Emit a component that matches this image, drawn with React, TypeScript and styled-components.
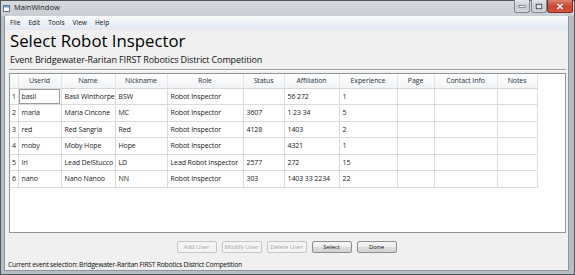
import React from 'react';
import styled, { createGlobalStyle } from 'styled-components';

const Global = createGlobalStyle`
  html, body { margin: 0; padding: 0; width: 575px; height: 275px; overflow: hidden; background: #fff; }
  body { font-family: "Open Sans", "Noto Sans", sans-serif; }
  * { box-sizing: border-box; }
`;

const Window = styled.div`
  width: 575px;
  height: 275px;
  display: flex;
  flex-direction: column;
  background: #b7bdc4;
  border: 1px solid #50565d;
`;

const TitleBar = styled.div`
  height: 15px;
  display: flex;
  align-items: flex-start;
  background: linear-gradient(#d6dadf, #c8cdd3);
`;

const TitleIcon = styled.svg`
  width: 7px;
  height: 7px;
  margin: 4px 0 0 2px;
`;

const TitleText = styled.span`
  font-size: 7.5px;
  line-height: 13px;
  margin-left: 4px;
  color: #1b1b1b;
`;

const Controls = styled.div`
  margin-left: auto;
  display: flex;
  margin-right: 1px;
`;

const CtrlButton = styled.div<{ $close?: boolean }>`
  width: ${p => (p.$close ? 26 : 16)}px;
  height: 13px;
  margin-top: -1px;
  border: 1px solid ${p => (p.$close ? '#7b2b22' : '#7f868e')};
  border-top: none;
  border-radius: 0 0 3px 3px;
  margin-left: ${p => (p.$close ? 0 : 1)}px;
  background: ${p =>
    p.$close
      ? 'linear-gradient(#e0806f, #c8442f 55%, #d4563f)'
      : 'linear-gradient(#e3e6ea, #c9ced4 55%, #d3d7dc)'};
  display: flex;
  align-items: center;
  justify-content: center;
`;

const Body = styled.div`
  flex: 1;
  display: flex;
  flex-direction: column;
  margin: 0 5px 3px 3px;
  background: #f0f0f0;
  border: 1px solid #8e959c;
  border-top: none;
`;

const MenuBar = styled.div`
  height: 14px;
  display: flex;
  align-items: center;
  padding-left: 1px;
  background: linear-gradient(#f6f8fc, #e3eaf4);
  border-top: 1px solid #fdfdfe;
  border-bottom: 1px solid #e6ebf2;
`;

const MenuItem = styled.span`
  font-size: 6.6px;
  line-height: 12px;
  padding: 0 4px;
  color: #111;
`;

const Central = styled.div`
  flex: 1;
  display: flex;
  flex-direction: column;
  padding: 0 2px 0 4px;
`;

const Heading = styled.h1`
  margin: 1px 0 0 0;
  font-weight: 400;
  font-size: 16.8px;
  line-height: 20px;
  color: #000;
  padding-left: 1px;
`;

const EventLine = styled.div`
  margin-top: 3px;
  font-size: 9px;
  line-height: 12px;
  letter-spacing: -0.12px;
  color: #111;
  padding-left: 1px;
`;

const Separator = styled.hr`
  margin: 3px 0 0 0;
  border: none;
  border-top: 1px solid #a0a0a0;
  border-bottom: 1px solid #ffffff;
  height: 0;
`;

const TableBox = styled.div`
  margin-top: 2px;
  height: 160px;
  border: 1px solid #8f969d;
  background: #fff;
  overflow: hidden;
`;

const Grid = styled.table`
  table-layout: fixed;
  border-collapse: collapse;
  width: 527px;
  font-size: 7px;
  letter-spacing: -0.1px;
  color: #1a1a1a;
`;

const HeadCell = styled.th`
  height: 14px;
  padding: 0;
  font-weight: 400;
  color: #2a3340;
  text-align: center;
  background: linear-gradient(#ffffff, #f7f8f9 60%, #f1f2f4);
  border-right: 1px solid #e3e5e8;
  border-bottom: 1px solid #d5d8dc;
  white-space: nowrap;
  overflow: hidden;
`;

const RowHead = styled.td`
  padding: 0 0 0 2px;
  border-right: 1px solid #dcdcdc;
  border-bottom: 1px solid #dcdcdc;
  color: #2a2a2a;
`;

const Cell = styled.td<{ $current?: boolean }>`
  height: 16.5px;
  padding: 0 3px;
  border-right: 1px solid #dcdcdc;
  border-bottom: 1px solid #dcdcdc;
  white-space: nowrap;
  overflow: hidden;
  outline: ${p => (p.$current ? '1px solid #9a9a9a' : 'none')};
  outline-offset: -2px;
`;

const ButtonRow = styled.div`
  display: flex;
  justify-content: center;
  gap: 5px;
  margin-top: 8px;
  padding-right: 2px;
`;

const PushButton = styled.button<{ $disabled?: boolean }>`
  width: 40px;
  height: 12px;
  padding: 0;
  font-family: inherit;
  font-size: 6px;
  line-height: 10px;
  border-radius: 2px;
  border: 1px solid ${p => (p.$disabled ? '#c4c6c8' : '#8c8f93')};
  color: ${p => (p.$disabled ? '#a4a4a4' : '#111')};
  background: ${p =>
    p.$disabled
      ? '#f4f4f4'
      : 'linear-gradient(#f4f4f4, #ececec 50%, #dddddd 51%, #d2d2d2)'};
`;

const StatusBar = styled.div`
  height: 11px;
  margin-top: auto;
  display: flex;
  align-items: center;
  padding-left: 3px;
  font-size: 6.8px;
  letter-spacing: -0.25px;
  color: #111;
`;

const columns = [
  { label: '', w: 8 },
  { label: 'UserId', w: 43 },
  { label: 'Name', w: 54 },
  { label: 'Nickname', w: 52 },
  { label: 'Role', w: 76 },
  { label: 'Status', w: 41 },
  { label: 'Affiliation', w: 55 },
  { label: 'Experience', w: 58 },
  { label: 'Page', w: 37 },
  { label: 'Contact Info', w: 63 },
  { label: 'Notes', w: 40 },
];

const rows = [
  ['basil', 'Basil Winthorpe', 'BSW', 'Robot Inspector', '', '56 272', '1'],
  ['maria', 'Maria Cincone', 'MC', 'Robot Inspector', '3607', '1 23 34', '5'],
  ['red', 'Red Sangria', 'Red', 'Robot Inspector', '4128', '1403', '2'],
  ['moby', 'Moby Hope', 'Hope', 'Robot Inspector', '', '4321', '1'],
  ['lri', 'Lead DelStucco', 'LD', 'Lead Robot Inspector', '2577', '272', '15'],
  ['nano', 'Nano Nanoo', 'NN', 'Robot Inspector', '303', '1403 33 2234', '22'],
];

export default function App() {
  return (
    <>
      <Global />
      <Window>
        <TitleBar>
          <TitleIcon viewBox="0 0 7 7">
            <rect x="0.5" y="0.5" width="6" height="6" fill="#fff" stroke="#6a7580" strokeWidth="1" />
            <rect x="1" y="1" width="5" height="1.5" fill="#6f9fd0" />
          </TitleIcon>
          <TitleText>MainWindow</TitleText>
          <Controls>
            <CtrlButton>
              <svg width="8" height="4" viewBox="0 0 8 4">
                <rect x="1" y="1.5" width="6" height="2" fill="#fff" stroke="#4a5058" strokeWidth="0.6" />
              </svg>
            </CtrlButton>
            <CtrlButton>
              <svg width="8" height="7" viewBox="0 0 8 7">
                <rect x="1.3" y="1.3" width="5.4" height="4.4" fill="none" stroke="#4a5058" strokeWidth="1" />
                <rect x="2.2" y="2.4" width="3.6" height="2.4" fill="none" stroke="#fff" strokeWidth="0.6" />
              </svg>
            </CtrlButton>
            <CtrlButton $close>
              <svg width="8" height="7" viewBox="0 0 8 7">
                <path d="M1.5 1 L6.5 6 M6.5 1 L1.5 6" stroke="#fff" strokeWidth="1.6" />
              </svg>
            </CtrlButton>
          </Controls>
        </TitleBar>
        <Body>
          <MenuBar>
            {['File', 'Edit', 'Tools', 'View', 'Help'].map(m => (
              <MenuItem key={m}>{m}</MenuItem>
            ))}
          </MenuBar>
          <Central>
            <Heading>Select Robot Inspector</Heading>
            <EventLine>Event Bridgewater-Raritan FIRST Robotics District Competition</EventLine>
            <Separator />
            <TableBox>
              <Grid>
                <colgroup>
                  {columns.map((c, i) => (
                    <col key={i} style={{ width: c.w }} />
                  ))}
                </colgroup>
                <thead>
                  <tr>
                    {columns.map((c, i) => (
                      <HeadCell key={i}>{c.label}</HeadCell>
                    ))}
                  </tr>
                </thead>
                <tbody>
                  {rows.map((r, i) => (
                    <tr key={i}>
                      <RowHead>{i + 1}</RowHead>
                      {r.map((v, j) => (
                        <Cell key={j} $current={i === 0 && j === 0}>
                          {v}
                        </Cell>
                      ))}
                      <Cell />
                      <Cell />
                      <Cell />
                    </tr>
                  ))}
                </tbody>
              </Grid>
            </TableBox>
            <ButtonRow>
              <PushButton $disabled>Add User</PushButton>
              <PushButton $disabled>Modify User</PushButton>
              <PushButton $disabled>Delete User</PushButton>
              <PushButton>Select</PushButton>
              <PushButton>Done</PushButton>
            </ButtonRow>
          </Central>
          <StatusBar>Current event selection: Bridgewater-Raritan FIRST Robotics District Competition</StatusBar>
        </Body>
      </Window>
    </>
  );
}
